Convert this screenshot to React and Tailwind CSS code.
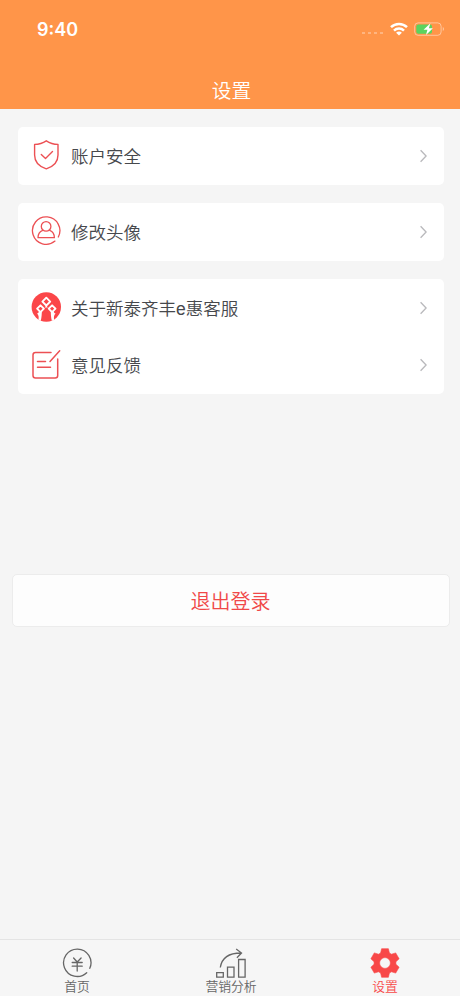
import clsx from 'clsx';

const menuGroups = [
  [{ icon: ShieldIcon, label: '账户安全' }],
  [{ icon: AvatarIcon, label: '修改头像' }],
  [
    { icon: BankIcon, label: '关于新泰齐丰e惠客服' },
    { icon: FeedbackIcon, label: '意见反馈' },
  ],
];

const tabs = [
  { icon: YuanIcon, label: '首页' },
  { icon: ChartIcon, label: '营销分析' },
  { icon: GearIcon, label: '设置', active: true },
];

export default function App() {
  return (
    <div className="flex h-screen w-full flex-col overflow-hidden bg-[#f5f5f5] font-['Noto_Sans_CJK_SC',sans-serif] font-[350]">
      <header className="flex h-[109px] flex-col bg-[#ff9549] text-white">
        <StatusBar />
        <h1 className="mt-[18px] pl-[3px] text-center text-[19.7px] leading-7 font-[350]">设置</h1>
      </header>

      <main className="flex flex-1 flex-col">
        <div className="flex flex-col gap-[18.5px] pt-[18px] pr-4 pl-[18px]">
          {menuGroups.map((items) => (
            <div key={items[0].label} className="rounded-[5px] bg-white">
              {items.map((item) => (
                <MenuRow key={item.label} {...item} />
              ))}
            </div>
          ))}
        </div>

        <button className="mt-[180px] mr-[10px] ml-3 h-[53px] rounded-[5px] border border-[#ececec] bg-[#fdfdfd] pr-px text-[20px] text-[#f04848]">
          退出登录
        </button>
      </main>

      <nav className="-mr-[2px] grid h-[57px] grid-cols-3 border-t border-[#e4e4e4] bg-[#f6f6f6]">
        {tabs.map((tab) => (
          <TabItem key={tab.label} {...tab} />
        ))}
      </nav>
    </div>
  );
}

function StatusBar() {
  return (
    <div className="flex h-[58px] items-center justify-between pr-[15px] pl-[37px]">
      <span className="pt-px font-['Inter',sans-serif] text-[18px] font-semibold">9:40</span>
      <div className="flex items-center">
        <div className="mt-2 mr-[7px] flex gap-[3px]">
          {[0, 1, 2, 3].map((i) => (
            <span key={i} className="h-[2px] w-[3px] bg-white/30" />
          ))}
        </div>
        <svg className="h-[14px] w-[18px]" viewBox="0 0 18 14" fill="none" stroke="#fff" strokeWidth="2.5">
          <path d="M1 5.2a11.4 11.4 0 0 1 16 0" />
          <path d="M4 8.6a7.1 7.1 0 0 1 10 0" />
          <path d="M9 13.6 6.1 10.8a4 4 0 0 1 5.8 0Z" fill="#fff" stroke="none" />
        </svg>
        <svg className="ml-[6px] h-[14px] w-[31px]" viewBox="0 0 31 14" fill="none">
          <rect x="0.7" y="0.9" width="26.4" height="12.4" rx="3.4" stroke="#fff" strokeOpacity="0.45" />
          <path d="M28.8 5v4c1.5-.6 1.5-3.4 0-4Z" fill="#fff" fillOpacity="0.5" />
          <rect x="2.3" y="2.4" width="15.7" height="9.4" rx="2" fill="#5bd35f" />
          <path d="M16.4 1.2 9.6 7.7h3.8l-1.4 5.2 6.9-6.7h-4Z" fill="#fff" />
        </svg>
      </div>
    </div>
  );
}

function MenuRow({ icon: Icon, label }) {
  return (
    <div className="flex h-[57.5px] items-center pr-4 pl-[13px]">
      <Icon className="mb-[2px] size-[30px] shrink-0" />
      <span className="ml-[10px] flex-1 pt-[2px] font-['Liberation_Sans','Noto_Sans_CJK_SC',sans-serif] text-[17.5px] text-[#46484c]">
        {label}
      </span>
      <svg className="h-[14px] w-[10px]" viewBox="0 0 10 14" fill="none" stroke="#b9b9bc" strokeWidth="1.3">
        <path d="m2.6 1.2 5.5 5.8-5.5 5.8" />
      </svg>
    </div>
  );
}

function TabItem({ icon: Icon, label, active }) {
  return (
    <div className={clsx('flex flex-col items-center pt-2', active ? 'text-[#f84848]' : 'text-[#666]')}>
      <Icon className="size-[30px]" />
      <span className="text-[12.8px] leading-4">{label}</span>
    </div>
  );
}

function ShieldIcon({ className }) {
  return (
    <svg className={className} viewBox="0 0 30 30" fill="none" stroke="#ec5054" strokeWidth="1.4" strokeLinecap="round" strokeLinejoin="round">
      <path d="M15.3.8C12 3 8 4.3 3.6 4.4V15c0 6.7 4.6 11.6 11.7 13.8C22.4 26.6 27 21.7 27 15V4.4C22.6 4.3 18.6 3 15.3.8Z" />
      <path d="m10.3 14.5 4.2 3.9 7-7" />
    </svg>
  );
}

function AvatarIcon({ className }) {
  return (
    <svg className={className} viewBox="0 0 30 30" fill="none" stroke="#ec5054" strokeWidth="1.3" strokeLinecap="round" strokeLinejoin="round">
      <path d="M24 25.1A13.7 13.7 0 1 1 27.3 21" />
      <circle cx="15.1" cy="10.4" r="4.8" />
      <path d="M11.7 14.3c-3.200 1.200-4.700 3.600-4.700 7.400h16.400c0-3.800-1.500-6.200-4.700-7.400" />
    </svg>
  );
}

function BankIcon({ className }) {
  return (
    <svg className={className} viewBox="0 0 30 30" fill="none">
      <circle cx="15.3" cy="15" r="14.7" fill="#fb4649" />
      <g stroke="#fff" strokeWidth="1.9" strokeLinejoin="round">
        <path d="m15.300 5.700 3.900 3.900-3.900 3.900-3.900-3.900Z" />
        <path d="m9.500 13.300 3.400 3.400-3.400 3.400-3.400-3.400Z" />
        <path d="m21.100 13.300 3.400 3.400-3.400 3.400-3.400-3.400Z" />
      </g>
      <path d="m15.300 13.300 1.500 2.200h-3Z" fill="#fff" />
      <path d="M7.800 19.500c0 1-.6 1.700-1.800 1.900 1.700 1.500 2 3.800 1.400 6.300l2.300 1.200c.9-3.300 1.100-6.600 1.100-9.400ZM22.800 19.500c0 1 .6 1.700 1.800 1.900-1.700 1.500-2 3.800-1.400 6.300l-2.300 1.200c-.9-3.300-1.100-6.600-1.100-9.400Z" fill="#fff" />
    </svg>
  );
}

function FeedbackIcon({ className }) {
  return (
    <svg className={className} viewBox="0 0 30 30" fill="none" stroke="#ec5054" strokeWidth="1.5" strokeLinecap="round" strokeLinejoin="round">
      <path d="M20 3.5H4.5A2.500 2.500 0 0 0 2 6v20.600a2.500 2.500 0 0 0 2.500 2.500h19.700a2.500 2.500 0 0 0 2.500-2.500V10" />
      <path d="m19 12.500 9.700-10.700M6.500 12.500h8M6.500 18.200h13" />
    </svg>
  );
}

function YuanIcon({ className }) {
  return (
    <svg className={className} viewBox="0 0 30 30" fill="none" stroke="currentColor" strokeWidth="1.3" strokeLinecap="round">
      <path d="M24.700 24.700A13.700 13.700 0 1 1 27.800 20.300" />
      <path d="m11.600 10 3.600 4 3.900-4M10.200 14.500h10M10.200 18.200h10M15.200 14v9" />
    </svg>
  );
}

function ChartIcon({ className }) {
  return (
    <svg className={className} viewBox="0 0 30 30" fill="none" stroke="currentColor" strokeWidth="1.3">
      <path d="M.7 24.700h6.600v4.400H.7ZM11.500 19.200H18v9.900h-6.500ZM22.600 11.500h6.500v17.600h-6.500Z" />
      <path d="M4.300 19.500C5.800 10 12.500 5 25 5M20.200 1.100 25.500 5l-4.600 4.800" />
    </svg>
  );
}

function GearIcon({ className }) {
  return (
    <svg className={className} viewBox="0 0 30 30" fill="currentColor" stroke="currentColor" strokeWidth="0.6" strokeLinejoin="round">
      <path
        fillRule="evenodd"
        d="M10.600 5 11.600.7h6.800l1 4.300 2.100 1.200 4.200-1.300 3.400 5.900-3.200 3v2.400l3.200 3-3.400 5.900-4.200-1.300-2.100 1.200-1 4.300h-6.800l-1-4.300-2.100-1.200-4.200 1.300-3.400-5.900 3.200-3v-2.400l-3.200-3 3.400-5.900 4.200 1.300ZM15 9.600a5.400 5.400 0 1 0 0 10.800 5.400 5.400 0 0 0 0-10.800Z"
      />
    </svg>
  );
}
